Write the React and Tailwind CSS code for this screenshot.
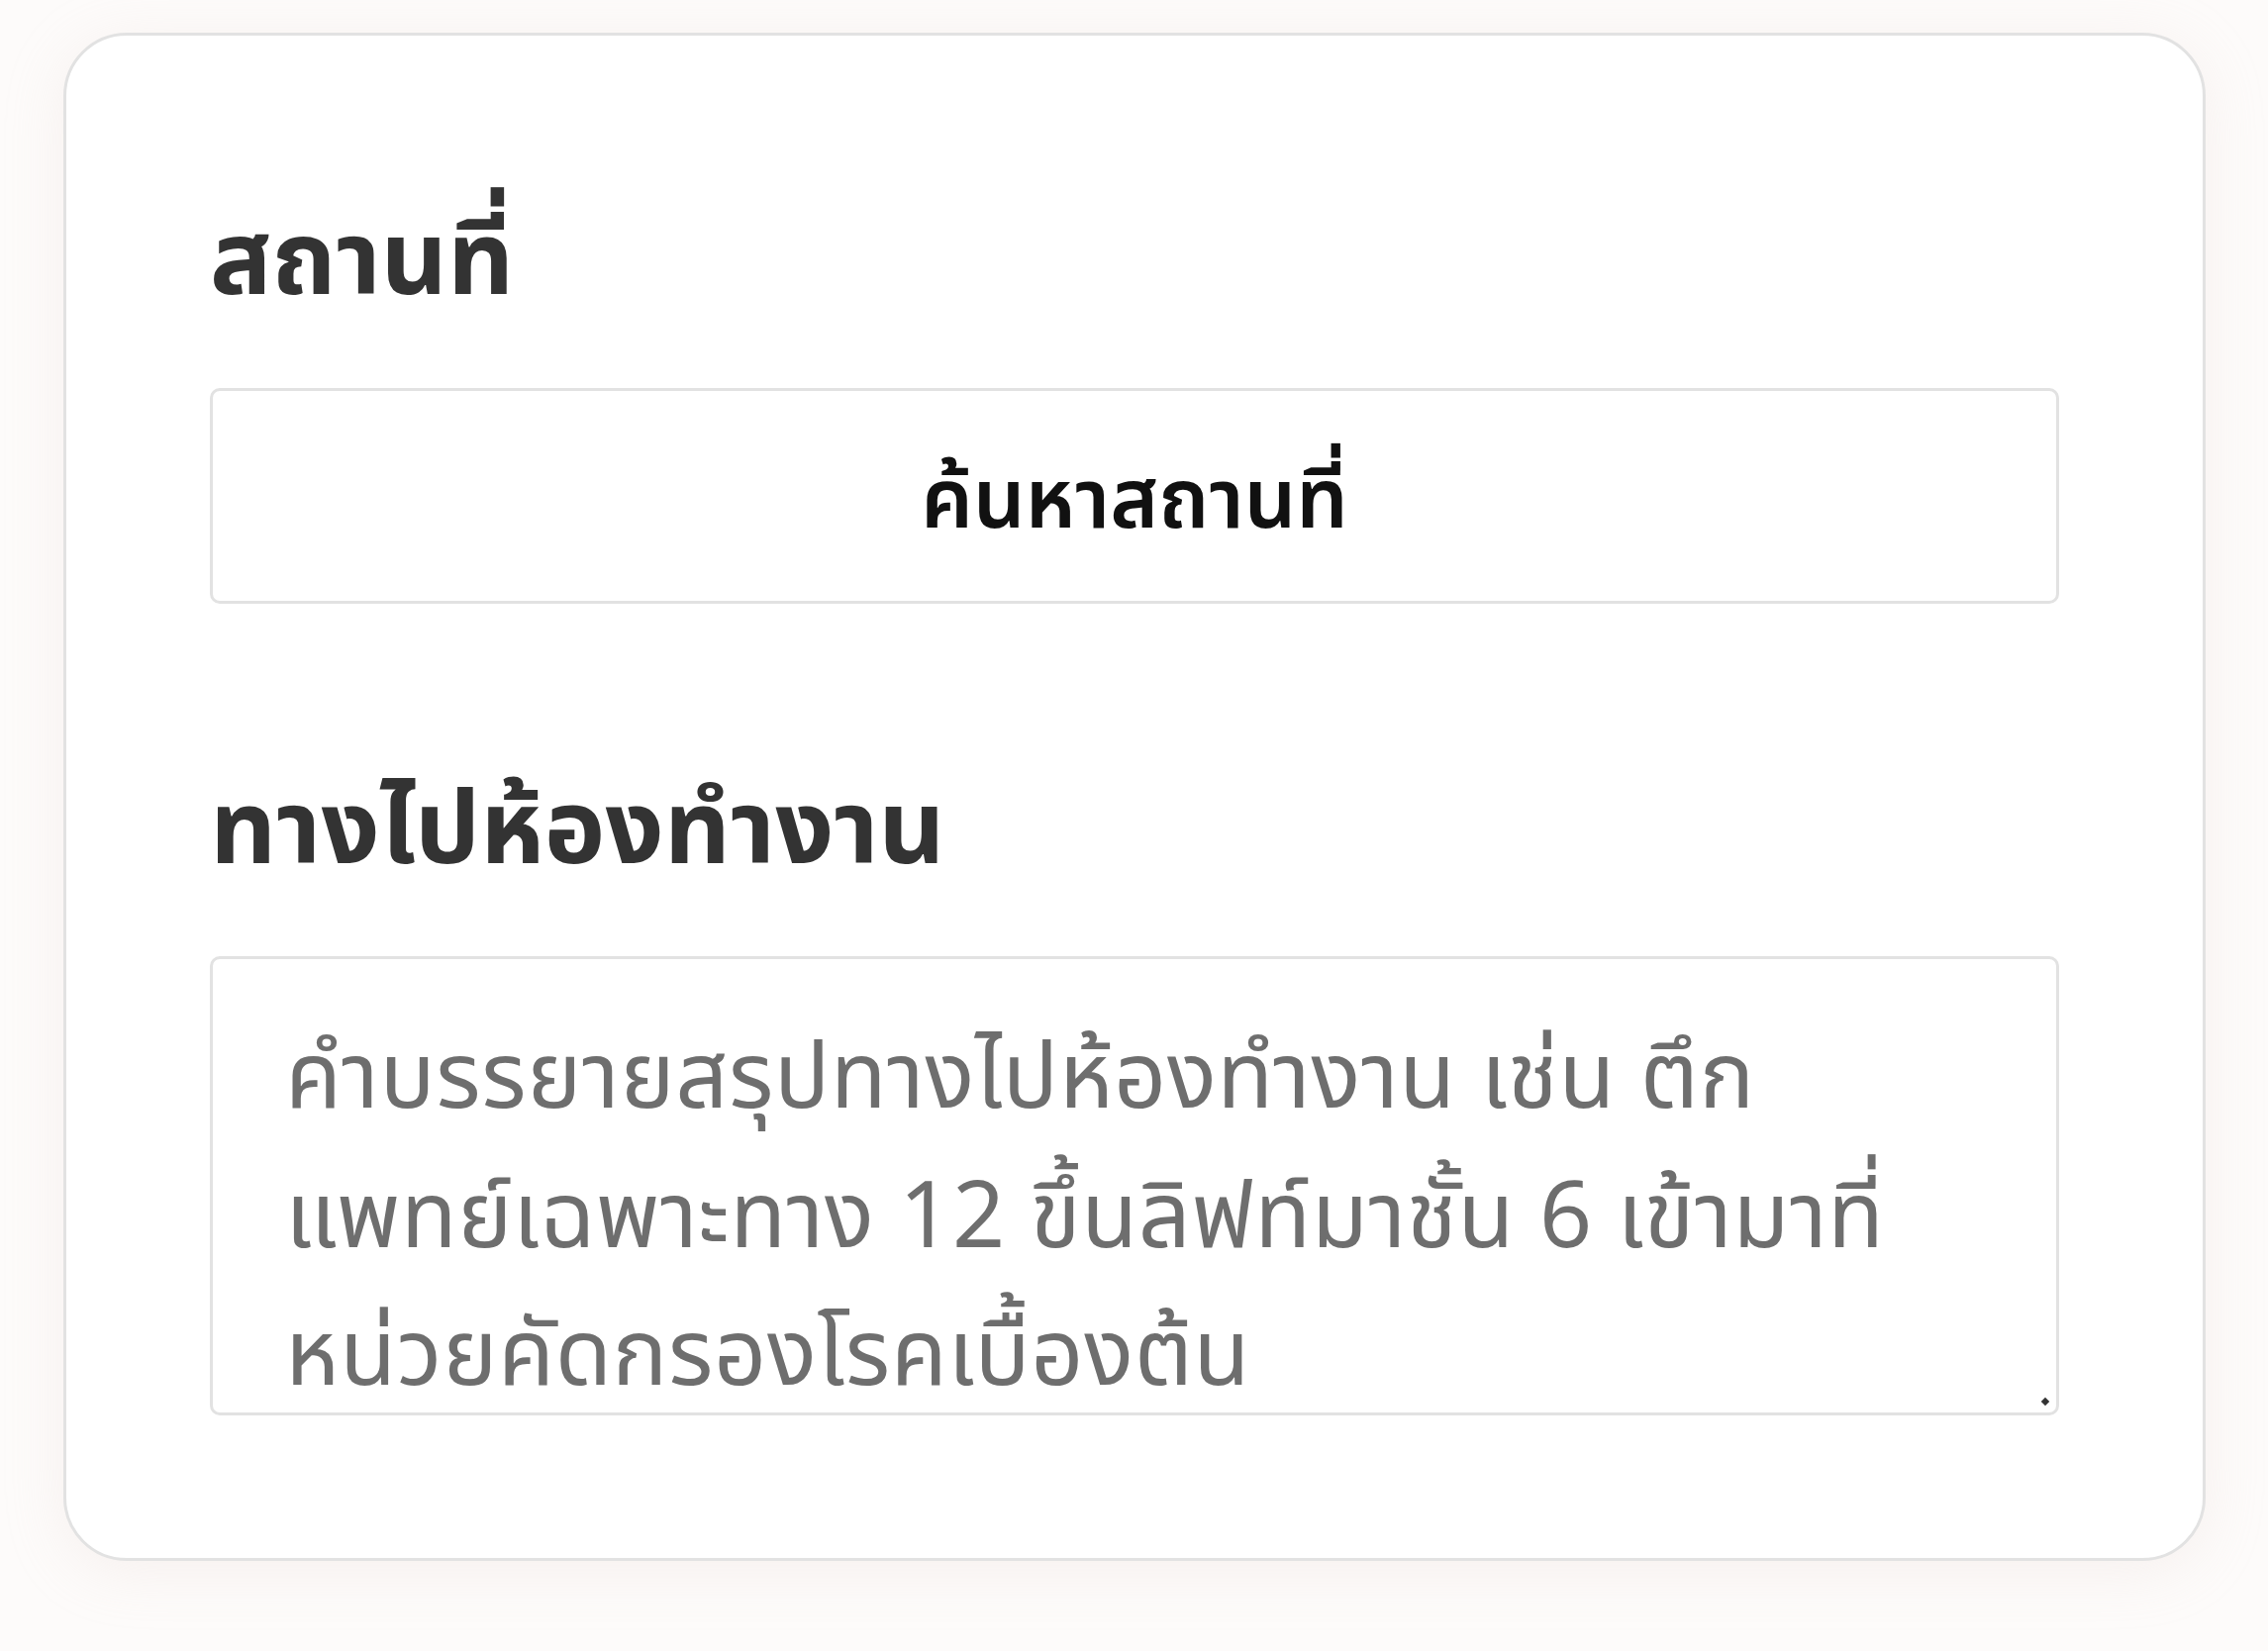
import React from "react";

export default function App() {
  const thai = { fontFamily: '"Noto Sans Thai", "Noto Sans", "DejaVu Sans", sans-serif' };
  return (
    <div className="min-h-[1668px] w-full bg-[#fdfbfa] pt-[33px] pl-[64px]" style={thai}>
      <div className="w-[2164px] h-[1544px] bg-white border-[3px] border-[#e2e2e2] rounded-[64px] shadow-[0_10px_60px_rgba(225,205,200,0.22)] px-[145px] pt-[170px]">
        <h2 className="text-[104px] leading-[120px] font-bold text-[#333333]">สถานที่</h2>
        <div className="mt-[66px] h-[218px] pt-[14px] border-[3px] border-[#e2e2e2] rounded-[10px] flex items-center justify-center">
          <span className="text-[83px] font-semibold text-[#111111]">ค้นหาสถานที่</span>
        </div>
        <h2 className="mt-[171px] text-[104px] leading-[120px] font-bold text-[#333333]">ทางไปห้องทำงาน</h2>
        <div className="relative mt-[65px] h-[464px] border-[3px] border-[#e2e2e2] rounded-[10px] px-[73px] pt-[51px]">
          <div className="text-[93px] leading-[141px] tracking-[0.6px] text-[#6e6e6e] whitespace-nowrap">
            <div>คำบรรยายสรุปทางไปห้องทำงาน เช่น ตึก</div>
            <div>แพทย์เฉพาะทาง 12 ขึ้นลิฟท์มาชั้น 6 เข้ามาที่</div>
            <div className="mt-[21px] leading-[96px]">หน่วยคัดกรองโรคเบื้องต้น</div>
          </div>
          <div className="absolute right-[8px] bottom-[8px] w-[6px] h-[6px] rotate-45 bg-[#333333]" />
        </div>
      </div>
    </div>
  );
}
